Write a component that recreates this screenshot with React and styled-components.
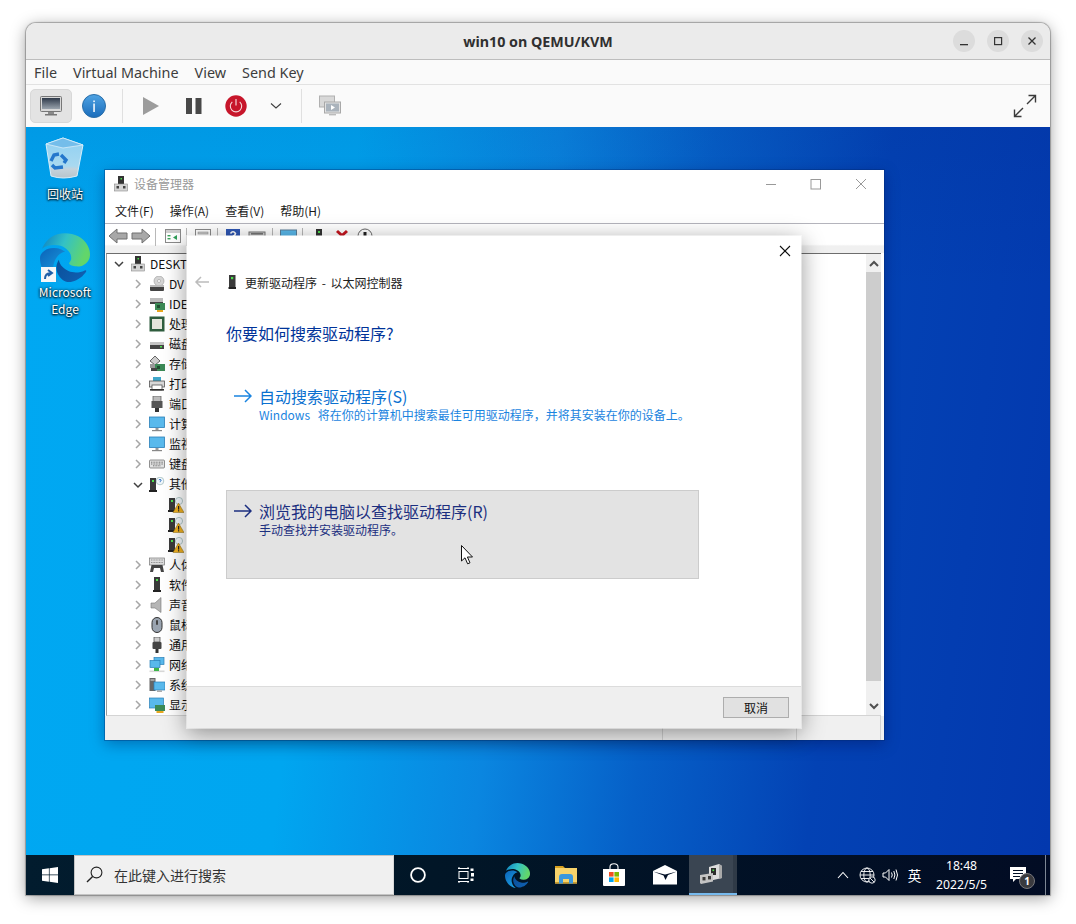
import React from "react";
import styled, { createGlobalStyle } from "styled-components";

const cjk = `"Noto Sans CJK SC", "Noto Sans", sans-serif`;
const latin = `"Noto Sans", "Noto Sans CJK SC", sans-serif`;

const Global = createGlobalStyle`
  html, body { margin: 0; background: #fff; overflow: hidden; }
  * { box-sizing: border-box; }
  svg { display: block; flex: none; }
`;

const Page = styled.div`
  width: 1076px;
  height: 924px;
  padding: 23px 26px 29px;
`;

const VmWindow = styled.div`
  height: 872px;
  display: flex;
  flex-direction: column;
  border-radius: 10px 10px 0 0;
  overflow: hidden;
  box-shadow: 0 0 1px 1px rgba(0, 0, 0, 0.28), 0 3px 16px rgba(0, 0, 0, 0.38);
`;

const TitleBar = styled.div`
  height: 37px;
  flex: none;
  display: flex;
  align-items: center;
  justify-content: center;
  position: relative;
  background: #ebebeb;
  border-bottom: 1px solid #bdbdbd;
  font: 700 14.3px ${latin};
  color: #303030;
`;

const WindowControls = styled.div`
  position: absolute;
  right: 7px;
  top: 7px;
  display: flex;
  gap: 12px;
`;

const RoundButton = styled.div`
  width: 22px;
  height: 22px;
  border-radius: 50%;
  background: #dcdcdc;
  display: flex;
  align-items: center;
  justify-content: center;
`;

const MenuBar = styled.div`
  height: 25px;
  flex: none;
  display: flex;
  align-items: center;
  gap: 16px;
  padding-left: 8px;
  background: #fafafa;
  border-bottom: 1px solid #e2e2e2;
  font: 400 14.4px ${latin};
  color: #3d3d3d;
`;

const Toolbar = styled.div`
  height: 42px;
  flex: none;
  display: flex;
  align-items: center;
  padding: 0 5px 0 4px;
  background: #fafafa;
`;

const ToolButton = styled.div`
  width: ${(p) => p.$w || 42}px;
  height: 34px;
  flex: none;
  display: flex;
  align-items: center;
  justify-content: center;
  border-radius: 5px;
  background: ${(p) => (p.$active ? "#e3e3e3" : "transparent")};
  border: 1px solid ${(p) => (p.$active ? "#d8d8d8" : "transparent")};
  margin-left: ${(p) => (p.$push ? "auto" : `${p.$ml || 0}px`)};
`;

const ToolSep = styled.div`
  width: 1px;
  height: 34px;
  flex: none;
  background: #e0e0e0;
  margin: 0 ${(p) => p.$r}px 0 ${(p) => p.$l}px;
`;

const Desktop = styled.div`
  flex: 1;
  position: relative;
  overflow: hidden;
  background:
    linear-gradient(180deg, rgba(0, 30, 120, 0.1) 0%, rgba(0, 30, 120, 0) 22%),
    linear-gradient(97deg, #00a8f2 0%, #00a6f0 30%, #0a86e0 48%, #0660c8 62%, #0342b4 78%, #0338ae 100%);
`;

const DesktopIcons = styled.div`
  width: 78px;
  padding-top: 10px;
  display: flex;
  flex-direction: column;
  gap: 31px;
`;

const DesktopIcon = styled.div`
  display: flex;
  flex-direction: column;
  align-items: center;
  position: relative;
  font: 400 12px/17px ${cjk};
  color: #fff;
  text-align: center;
  text-shadow: 0 1px 2px #000, 0 0 3px rgba(0, 0, 0, 0.9);
`;

const IconLabel = styled.div`
  margin-top: ${(p) => p.$mt}px;
`;

const ShortcutBadge = styled.div`
  position: absolute;
  left: 15px;
  top: 34px;
  width: 15px;
  height: 15px;
  background: #f4f6f8;
  display: flex;
  align-items: center;
  justify-content: center;
`;

/* windows sit on a free canvas */
const DevMgr = styled.div`
  position: absolute;
  left: 79px;
  top: 43px;
  width: 779px;
  height: 570px;
  display: flex;
  flex-direction: column;
  background: #fff;
  box-shadow: 0 0 0 1px rgba(0, 40, 110, 0.35), 0 4px 14px rgba(0, 10, 70, 0.35);
  font: 400 12px ${cjk};
  color: #1a1a1a;
`;

const DevTitle = styled.div`
  height: 28px;
  flex: none;
  display: flex;
  align-items: center;
  padding: 0 0 1px 8px;
  gap: 5px;
  color: #999;
`;

const DevControls = styled.div`
  margin-left: auto;
  display: flex;
  align-items: center;
  gap: 29px;
  padding-right: 15px;
`;

const DevMenu = styled.div`
  height: 26px;
  flex: none;
  display: flex;
  align-items: center;
  padding-left: 10px;
  border-bottom: 1px solid #b4b4bc;
  gap: 16px;
`;

const DevToolbar = styled.div`
  height: 29px;
  flex: none;
  display: flex;
  align-items: flex-start;
  padding: 4px 0 0 1px;
  background: linear-gradient(180deg, #fff 0%, #fff 70%, #f0f0f0 76%, #f0f0f0 100%);
`;

const DevTool = styled.div`
  width: ${(p) => p.$w || 23}px;
  height: 18px;
  flex: none;
  display: flex;
  justify-content: center;
`;

const DevToolSep = styled.div`
  width: 1px;
  height: 18px;
  flex: none;
  background: #b8b8b8;
  margin: 0 ${(p) => p.$r}px 0 ${(p) => p.$l}px;
`;

const DevBody = styled.div`
  flex: 1;
  display: flex;
  min-height: 0;
  margin: 0 3px 0 1px;
  border-top: 1px solid #6d6d6d;
  border-bottom: 1px solid #d4d4d4;
  border-left: 1px solid #9a9a9a;
`;

const Tree = styled.div`
  flex: 1;
  display: flex;
  flex-direction: column;
`;

const TreeRow = styled.div`
  height: ${(p) => (p.$tall ? 21 : 20)}px;
  flex: none;
  display: flex;
  align-items: center;
  padding-left: ${(p) => p.$pad}px;
  white-space: nowrap;
`;

const Caret = styled.div`
  width: 16px;
  height: 16px;
  flex: none;
  margin-right: 3px;
  display: flex;
  align-items: center;
  justify-content: center;
`;

const RowText = styled.span`
  margin: 0 0 2px 4px;
  color: #111;
`;

const Scrollbar = styled.div`
  width: 15px;
  flex: none;
  display: flex;
  flex-direction: column;
  background: #f0f0f0;
  align-items: center;
`;

const ScrollEnd = styled.div`
  height: 18px;
  width: 100%;
  flex: none;
  display: flex;
  align-items: center;
  justify-content: center;
`;

const ScrollThumb = styled.div`
  width: 100%;
  height: 409px;
  background: #cdcdcd;
`;

const ScrollTrack = styled.div`
  flex: 1;
`;

const StatusBar = styled.div`
  height: 24px;
  flex: none;
  display: flex;
  background: #f0f0f0;
`;

const StatusCell = styled.div`
  width: ${(p) => p.$w}px;
  border-right: 1px solid #d2d2d2;
`;

const Dialog = styled.div`
  position: absolute;
  left: 161px;
  top: 109px;
  width: 614px;
  height: 492px;
  display: flex;
  flex-direction: column;
  background: #fff;
  box-shadow: 0 0 0 1px rgba(255, 255, 255, 0.5), 0 5px 22px rgba(0, 0, 0, 0.42);
  font: 400 12px ${cjk};
`;

const DialogTop = styled.div`
  height: 30px;
  flex: none;
  display: flex;
  align-items: center;
  justify-content: flex-end;
  padding-right: 8px;
`;

const DialogHead = styled.div`
  height: 32px;
  flex: none;
  display: flex;
  align-items: center;
  padding-left: 7px;
  color: #222;
  word-spacing: 2px;
`;

const HeadIcon = styled.div`
  margin-right: ${(p) => p.$mr}px;
`;

const Heading = styled.div`
  margin: 23px 0 30px 39px;
  font-size: 16px;
  line-height: 24px;
  color: #003399;
`;

const Options = styled.div`
  margin-left: 39px;
  width: 473px;
  display: flex;
  flex-direction: column;
  gap: 26px;
`;

const Option = styled.div`
  height: 89px;
  padding: 9px 0 0 7px;
  display: flex;
  gap: 7px;
  position: relative;
  background: ${(p) => (p.$hover ? "#e3e3e3" : "transparent")};
  border: 1px solid ${(p) => (p.$hover ? "#cccccc" : "transparent")};
`;

const ArrowBox = styled.div`
  height: 22px;
  display: flex;
  align-items: center;
`;

const OptionTitle = styled.div`
  font-size: 16px;
  line-height: 22px;
  color: ${(p) => (p.$hover ? "#1c2f80" : "#0a70cf")};
`;

const OptionSub = styled.div`
  font-size: 12px;
  line-height: 18px;
  margin-top: -1px;
  word-spacing: 5px;
  color: ${(p) => (p.$hover ? "#1c2f80" : "#1a84e0")};
`;

const Cursor = styled.div`
  position: absolute;
  left: 234px;
  top: 54px;
`;

const DialogFoot = styled.div`
  margin-top: auto;
  height: 42px;
  flex: none;
  display: flex;
  align-items: center;
  justify-content: flex-end;
  padding: 0 12px 1px 0;
  background: #efefef;
  border-top: 1px solid #dcdcdc;
`;

const CancelButton = styled.div`
  width: 66px;
  height: 21px;
  display: flex;
  align-items: center;
  justify-content: center;
  background: #e1e1e1;
  border: 1px solid #adadad;
  color: #111;
`;

const Taskbar = styled.div`
  height: 40px;
  flex: none;
  display: flex;
  align-items: stretch;
  background: linear-gradient(90deg, #021c2e 0%, #011627 40%, #020c24 100%);
`;

const StartButton = styled.div`
  width: 48px;
  flex: none;
  display: flex;
  align-items: center;
  justify-content: center;
`;

const SearchBox = styled.div`
  width: 320px;
  flex: none;
  display: flex;
  align-items: center;
  padding: 0 0 1px 11px;
  gap: 11px;
  background: #f0f0f0;
  border: 1px solid #c4c4c4;
  border-right-color: #d8d8d8;
  font: 400 14px ${cjk};
  color: #333;
`;

const TaskItem = styled.div`
  width: ${(p) => p.$w}px;
  flex: none;
  display: flex;
  align-items: center;
  justify-content: center;
  background: ${(p) => (p.$active ? "#3a4552" : "transparent")};
  border-bottom: ${(p) => (p.$active ? "2px solid #76b9ed" : "none")};
`;

const TaskEdgeStrip = styled.div`
  width: 4px;
  flex: none;
  background: #2f3a47;
  border-bottom: 2px solid #76b9ed;
`;

const Tray = styled.div`
  margin-left: auto;
  display: flex;
  align-items: stretch;
  color: #fff;
`;

const TrayItem = styled.div`
  width: ${(p) => p.$w}px;
  flex: none;
  display: flex;
  align-items: center;
  justify-content: center;
  position: relative;
  font: 400 13.5px ${cjk};
`;

const Clock = styled.div`
  width: 69px;
  flex: none;
  display: flex;
  flex-direction: column;
  align-items: center;
  justify-content: center;
  font: 400 12.2px/19px ${latin};
`;

const NoticeBadge = styled.div`
  position: absolute;
  left: 23px;
  top: 18px;
  width: 16px;
  height: 16px;
  border-radius: 50%;
  background: #3a3a3e;
  border: 1px solid #77777c;
  display: flex;
  align-items: center;
  justify-content: center;
  font: 700 10px ${latin};
  color: #fff;
`;

const ShowDesktop = styled.div`
  width: 5px;
  margin-left: 5px;
  flex: none;
  border-left: 1px solid #7d8794;
`;

/* ---- drawings ---- */

function EdgeLogo({ size, id }) {
  return (
    <svg width={size} height={size} viewBox="0 0 24 24">
      <defs>
        <linearGradient id={`${id}a`} x1="0" y1="0" x2="1" y2="0.3">
          <stop offset="0" stopColor="#0c7fc4" />
          <stop offset="0.5" stopColor="#33c1c6" />
          <stop offset="1" stopColor="#62d66a" />
        </linearGradient>
        <linearGradient id={`${id}b`} x1="0" y1="0" x2="0.7" y2="1">
          <stop offset="0" stopColor="#0b62b8" />
          <stop offset="1" stopColor="#1ba0e2" />
        </linearGradient>
        <linearGradient id={`${id}c`} x1="0" y1="0" x2="1" y2="0.6">
          <stop offset="0" stopColor="#0a4f9a" />
          <stop offset="1" stopColor="#0f5fb0" />
        </linearGradient>
      </defs>
      <path
        fill={`url(#${id}c)`}
        d="M21.86 17.86q.14 0 .25.12.1.13.1.25t-.11.33l-.32.46-.43.53-.44.5q-.21.25-.38.42l-.22.23q-.58.53-1.34 1.04-.76.51-1.6.91-.86.4-1.74.64t-1.67.24q-.9 0-1.69-.28-.8-.28-1.48-.78-.68-.5-1.22-1.17-.53-.66-.92-1.44-.38-.77-.58-1.6-.2-.83-.2-1.67 0-1 .32-1.96.33-.97.87-1.8.14.95.55 1.77.41.82 1.02 1.5.6.68 1.38 1.21.78.54 1.64.9.86.36 1.77.56.92.2 1.8.2 1.12 0 2.18-.24 1.06-.23 2.06-.72l.2-.1.2-.05z"
      />
      <path
        fill={`url(#${id}b)`}
        d="M6.36 16.59q0 1.1.27 2.15.27 1.06.78 2.03.51.96 1.24 1.77.74.82 1.66 1.4-1.47-.2-2.8-.74-1.33-.55-2.48-1.37-1.15-.83-2.08-1.9-.92-1.07-1.58-2.33T.36 14.94Q0 13.54 0 12.06q0-.81.32-1.49.31-.68.83-1.23.53-.55 1.2-.96.66-.4 1.35-.66.74-.27 1.5-.39.78-.12 1.55-.12.7 0 1.42.1.72.12 1.4.35.68.23 1.32.57.63.35 1.16.83-.35 0-.7.07-.33.07-.65.23v-.02q-.63.28-1.2.74-.57.46-1.05 1.04-.48.58-.87 1.26-.38.67-.65 1.39-.27.71-.42 1.44-.15.72-.15 1.38z"
      />
      <path
        fill={`url(#${id}a)`}
        d="M11.96.06q1.7 0 3.33.39 1.63.38 3.07 1.15 1.43.77 2.62 1.93 1.18 1.16 1.98 2.7.49.94.76 1.96.28 1 .28 2.08 0 .89-.23 1.7-.24.8-.69 1.48-.45.68-1.1 1.22-.64.53-1.45.88-.54.24-1.11.36-.58.13-1.16.13-.42 0-.97-.03-.54-.03-1.1-.12-.55-.1-1.05-.28-.5-.19-.84-.5-.12-.09-.23-.24-.1-.16-.1-.33 0-.15.16-.35.16-.2.35-.5.2-.28.36-.68.16-.4.16-.95 0-1.06-.4-1.96-.4-.91-1.06-1.64-.66-.74-1.52-1.28-.86-.55-1.79-.89-.84-.3-1.72-.44-.87-.14-1.76-.14-1.55 0-3.06.45T.94 7.55q.71-1.74 1.81-3.13 1.1-1.38 2.52-2.35Q6.68 1.1 8.37.58q1.7-.52 3.58-.52Z"
      />
    </svg>
  );
}

function RecycleBin() {
  return (
    <svg width="40" height="42" viewBox="0 0 40 42">
      <defs>
        <linearGradient id="binBody" x1="0" y1="0" x2="0" y2="1">
          <stop offset="0" stopColor="#8fd0f2" />
          <stop offset="0.7" stopColor="#a9d9f0" />
          <stop offset="0.78" stopColor="#c4d3dc" />
          <stop offset="1" stopColor="#b8c4cc" />
        </linearGradient>
      </defs>
      <path d="M1 7 L18 1 L38 8 L32 39 Q18 43 6 39 Z" fill="url(#binBody)" stroke="#d8eef9" strokeWidth="1" />
      <path d="M1 7 L18 1 L38 8 L18 11 Z" fill="#74bdea" stroke="#d8eef9" strokeWidth="0.8" />
      <g fill="none" stroke="#2477cc" strokeWidth="3.4">
        <path d="M6 24 L9 18 L14 17" />
        <path d="M16 18 L21 23 L19 26" />
        <path d="M18 30 L10 31 L7 28" />
      </g>
    </svg>
  );
}

function WinLogo() {
  return (
    <svg width="16" height="16" viewBox="0 0 16 16" fill="#fff">
      <path d="M0 2.3 L6.9 1.3 V7.5 H0 Z" />
      <path d="M7.6 1.2 L16 0 V7.5 H7.6 Z" />
      <path d="M0 8.2 H6.9 V14.7 L0 13.7 Z" />
      <path d="M7.6 8.2 H16 V16 L7.6 14.8 Z" />
    </svg>
  );
}

function Tower({ x = 4, y = 0, w = 8, h = 14 }) {
  return (
    <g>
      <rect x={x} y={y} width={w} height={h} fill="#3a3a3a" />
      <rect x={x + w / 2 - 1} y={y + 2} width="2" height="2" fill="#4de04d" />
      <rect x={x - 1} y={y + h} width={w + 2} height="2" fill="#222" />
    </g>
  );
}

const treeIcons = {
  root: (
    <g>
      <rect x="5" y="0" width="6" height="8" fill="#333" />
      <rect x="7.5" y="2" width="1.5" height="1.5" fill="#4de04d" />
      <rect x="1.5" y="8" width="13" height="7" fill="#d4d4d4" stroke="#8a8a8a" strokeWidth="0.6" />
      <rect x="3.5" y="10" width="2.5" height="2.5" fill="#444" />
      <rect x="10" y="10" width="2.5" height="2.5" fill="#444" />
    </g>
  ),
  dvd: (
    <g>
      <circle cx="10" cy="5" r="5" fill="#d4d4d4" stroke="#999" strokeWidth="0.6" />
      <circle cx="10" cy="5" r="1.5" fill="#fff" stroke="#888" strokeWidth="0.5" />
      <rect x="1" y="10" width="14" height="5" rx="1" fill="#444" />
      <rect x="1" y="9" width="14" height="2" fill="#bbb" />
    </g>
  ),
  ide: (
    <g>
      <rect x="1" y="2" width="13" height="4" fill="#bdbdbd" />
      <rect x="1" y="6" width="13" height="2" fill="#444" />
      <rect x="6" y="7" width="10" height="7" fill="#3c8a56" />
      <rect x="8" y="9" width="3" height="3" fill="#1f4e30" />
      <rect x="8" y="14" width="6" height="2" fill="#e8a820" />
    </g>
  ),
  cpu: (
    <g>
      <rect x="0.5" y="0.5" width="15" height="15" fill="#2f5d3e" />
      <rect x="3" y="3" width="10" height="10" fill="#e6e6dc" />
    </g>
  ),
  disk: (
    <g>
      <rect x="1" y="6" width="14" height="3" fill="#c4c4c4" />
      <rect x="1" y="9" width="14" height="4" fill="#444" />
      <rect x="11" y="10" width="2" height="1.5" fill="#4de04d" />
    </g>
  ),
  storage: (
    <g>
      <path d="M1 5 L6 0 L11 5 L6 9 Z" fill="#ccc" stroke="#444" strokeWidth="0.8" />
      <rect x="1" y="8" width="9" height="4" fill="#999" />
      <rect x="6" y="8" width="10" height="7" fill="#3c8a56" />
      <rect x="8" y="10" width="3" height="3" fill="#1f4e30" />
      <rect x="2" y="12" width="6" height="3" fill="#444" />
    </g>
  ),
  printer: (
    <g>
      <rect x="4" y="1" width="8" height="4" fill="#3fa7c9" />
      <rect x="0.5" y="5" width="15" height="6" fill="#d8d8d8" stroke="#555" strokeWidth="0.8" />
      <rect x="3" y="9" width="10" height="5" fill="#fff" stroke="#555" strokeWidth="0.8" />
      <rect x="1" y="13" width="14" height="1.6" fill="#333" />
    </g>
  ),
  port: (
    <g>
      <rect x="4" y="0" width="8" height="6" fill="#bbb" stroke="#555" strokeWidth="0.7" />
      <rect x="2.5" y="5" width="11" height="7" fill="#555" />
      <rect x="6" y="12" width="4" height="4" fill="#333" />
    </g>
  ),
  monitor: (
    <g>
      <rect x="0.5" y="1" width="15" height="10.5" fill="#59b9ec" stroke="#2a7fb8" strokeWidth="0.8" />
      <rect x="6.5" y="12" width="3" height="2" fill="#999" />
      <rect x="3" y="14" width="10" height="1.2" fill="#888" />
    </g>
  ),
  keyboard: (
    <g>
      <rect x="0.5" y="4" width="15" height="8" rx="1" fill="#e2e2e2" stroke="#666" strokeWidth="0.7" />
      <path d="M2 6.2 H14 M2 8 H14 M4 9.8 H12" stroke="#666" strokeWidth="0.9" strokeDasharray="1 0.6" />
    </g>
  ),
  other: (
    <g>
      <Tower x={1} y={1} w={6} h={12} />
      <circle cx="11" cy="4" r="3.8" fill="#f2f8fc" stroke="#8aa" strokeWidth="0.6" />
      <path d="M9.8 3 Q11 1.6 12.2 3 Q12.2 4 11 4.6 V5.2" fill="none" stroke="#2a6fc4" strokeWidth="0.9" />
    </g>
  ),
  warn: (
    <g>
      <Tower x={1} y={1} w={6} h={12} />
      <circle cx="11" cy="4" r="3.6" fill="#f2f8fc" stroke="#8aa" strokeWidth="0.6" />
      <path d="M10.5 6 L16 15.5 H5 Z" fill="#f0b020" stroke="#8a6a10" strokeWidth="0.5" />
      <rect x="10" y="9" width="1.2" height="3.6" fill="#222" />
      <rect x="10" y="13.2" width="1.2" height="1.2" fill="#222" />
    </g>
  ),
  hid: (
    <g>
      <rect x="0.5" y="1" width="15" height="7" fill="#ddd" stroke="#777" strokeWidth="0.7" />
      <path d="M2 3 H14 M2 5.5 H14" stroke="#888" strokeWidth="0.9" strokeDasharray="1 0.6" />
      <path d="M1 15 L2.5 8 H13.5 L15 15 H12 L11 11 H5 L4 15 Z" fill="#444" />
    </g>
  ),
  soft: <Tower x={5} y={0} w={6} h={13} />,
  sound: (
    <g>
      <path d="M2 6 H6 L12 0.5 V15.5 L6 11 H2 Z" fill="#b5b5b5" stroke="#777" strokeWidth="0.6" />
    </g>
  ),
  mouse: (
    <g>
      <rect x="3" y="0.5" width="10" height="15" rx="5" fill="#9aa4b0" stroke="#333" strokeWidth="1" />
      <rect x="7" y="3" width="2" height="5" rx="1" fill="#444" />
    </g>
  ),
  usb: (
    <g>
      <rect x="5" y="0" width="6" height="5" fill="#ccc" stroke="#444" strokeWidth="0.7" />
      <rect x="3.5" y="5" width="9" height="7" rx="1" fill="#444" />
      <rect x="6.5" y="12" width="3" height="4" fill="#333" />
    </g>
  ),
  net: (
    <g>
      <rect x="5" y="0.5" width="10" height="7" fill="#59b9ec" stroke="#2a7fb8" strokeWidth="0.7" />
      <rect x="1" y="3.5" width="10" height="7" fill="#59b9ec" stroke="#2a7fb8" strokeWidth="0.7" />
      <rect x="0.5" y="13.5" width="15" height="1.6" fill="#d8d8d8" />
      <rect x="5" y="11" width="5" height="3" fill="#3db54a" />
    </g>
  ),
  system: (
    <g>
      <rect x="0.5" y="1" width="6" height="13" fill="#666" />
      <rect x="1.5" y="2.5" width="4" height="1" fill="#ddd" />
      <rect x="5" y="5" width="11" height="8" fill="#59b9ec" stroke="#2a7fb8" strokeWidth="0.7" />
      <rect x="8" y="13.5" width="5" height="1.3" fill="#999" />
    </g>
  ),
  display: (
    <g>
      <rect x="0.5" y="1" width="14" height="10" fill="#59b9ec" stroke="#2a7fb8" strokeWidth="0.7" />
      <rect x="6" y="8" width="10" height="6" fill="#3c8a56" />
      <rect x="7.5" y="14" width="7" height="2" fill="#e8a820" />
    </g>
  ),
};

function TreeIcon({ name }) {
  return (
    <svg width="16" height="16" viewBox="0 0 16 16">
      {treeIcons[name]}
    </svg>
  );
}

function Chevron({ open }) {
  return (
    <svg width="10" height="10" viewBox="0 0 10 10" fill="none" stroke={open ? "#404040" : "#a6a6a6"} strokeWidth="1.5">
      {open ? <path d="M1 3 L5 7 L9 3" /> : <path d="M3 1 L7 5 L3 9" />}
    </svg>
  );
}

function LongArrow({ color }) {
  return (
    <svg width="18" height="14" viewBox="0 0 18 14" fill="none" stroke={color} strokeWidth="1.5">
      <path d="M0 7 H17 M11 1 L17 7 L11 13" />
    </svg>
  );
}

const treeRows = [
  { level: 0, icon: "root", text: "DESKT", open: true },
  { level: 1, icon: "dvd", text: "DV" },
  { level: 1, icon: "ide", text: "IDE" },
  { level: 1, icon: "cpu", text: "处理" },
  { level: 1, icon: "disk", text: "磁盘" },
  { level: 1, icon: "storage", text: "存储" },
  { level: 1, icon: "printer", text: "打印" },
  { level: 1, icon: "port", text: "端口" },
  { level: 1, icon: "monitor", text: "计算" },
  { level: 1, icon: "monitor", text: "监视" },
  { level: 1, icon: "keyboard", text: "键盘" },
  { level: 1, icon: "other", text: "其他", open: true, tall: true },
  { level: 2, icon: "warn" },
  { level: 2, icon: "warn" },
  { level: 2, icon: "warn" },
  { level: 1, icon: "hid", text: "人体" },
  { level: 1, icon: "soft", text: "软件" },
  { level: 1, icon: "sound", text: "声音" },
  { level: 1, icon: "mouse", text: "鼠标" },
  { level: 1, icon: "usb", text: "通用" },
  { level: 1, icon: "net", text: "网络" },
  { level: 1, icon: "system", text: "系统" },
  { level: 1, icon: "display", text: "显示" },
];

const rowPad = [4, 23, 61];

function DevToolbarIcons() {
  return (
    <>
      <DevTool>
        <svg width="20" height="16" viewBox="0 0 20 16">
          <path d="M1 8 L9 1 V5 H19 V11 H9 V15 Z" fill="#a8a8a8" stroke="#707070" />
        </svg>
      </DevTool>
      <DevTool>
        <svg width="20" height="16" viewBox="0 0 20 16">
          <path d="M19 8 L11 1 V5 H1 V11 H11 V15 Z" fill="#a8a8a8" stroke="#707070" />
        </svg>
      </DevTool>
      <DevToolSep $l={3} $r={5} />
      <DevTool>
        <svg width="16" height="16" viewBox="0 0 16 16">
          <rect x="0.5" y="1.5" width="15" height="13" fill="#fff" stroke="#8a8a8a" />
          <rect x="1" y="2" width="14" height="3" fill="#cfcfcf" />
          <rect x="2.5" y="7" width="3" height="1.4" fill="#3aa35a" />
          <rect x="2.5" y="10" width="3" height="1.4" fill="#3aa35a" />
          <path d="M12 7 L8 9.5 L12 12 Z" fill="#2f9e58" />
        </svg>
      </DevTool>
      <DevToolSep $l={2} $r={4} />
      <DevTool>
        <svg width="16" height="16" viewBox="0 0 16 16">
          <rect x="0.5" y="1.5" width="15" height="13" fill="#fff" stroke="#8a8a8a" />
          <rect x="3" y="4" width="10" height="2" fill="#cfcfcf" stroke="#8a8a8a" strokeWidth="0.5" />
        </svg>
      </DevTool>
      <DevToolSep $l={3} $r={3} />
      <DevTool>
        <svg width="16" height="16" viewBox="0 0 16 16">
          <rect x="1" y="1" width="14" height="14" fill="#2f57b4" />
          <path d="M5.5 5.5 Q8 2 10.5 5.5 Q10.5 7 8 8.5 V10" fill="none" stroke="#fff" strokeWidth="1.6" />
        </svg>
      </DevTool>
      <DevTool $w={25}>
        <svg width="18" height="16" viewBox="0 0 18 16">
          <rect x="1" y="4" width="16" height="8" fill="#cfcfcf" stroke="#777" />
          <rect x="3" y="5" width="12" height="1.6" fill="#777" />
        </svg>
      </DevTool>
      <DevToolSep $l={3} $r={4} />
      <DevTool>
        <svg width="18" height="16" viewBox="0 0 18 16">
          <rect x="0.5" y="2" width="16" height="12" fill="#59b9ec" stroke="#5a7f9a" />
        </svg>
      </DevTool>
      <DevToolSep $l={2} $r={4} />
      <DevTool>
        <svg width="12" height="16" viewBox="0 0 12 16">
          <rect x="3" y="1" width="6" height="13" fill="#333" />
          <rect x="5" y="3" width="2" height="2" fill="#4de04d" />
        </svg>
      </DevTool>
      <DevTool>
        <svg width="14" height="14" viewBox="0 0 14 14">
          <path d="M2 3 L12 12 M12 3 L2 12" stroke="#c6161f" strokeWidth="3" />
        </svg>
      </DevTool>
      <DevTool>
        <svg width="16" height="16" viewBox="0 0 16 16">
          <circle cx="8" cy="8" r="7" fill="#fff" stroke="#666" />
          <rect x="6.5" y="4" width="3" height="6" fill="#222" />
        </svg>
      </DevTool>
    </>
  );
}

export default function App() {
  return (
    <Page>
      <Global />
      <VmWindow>
        <TitleBar>
          win10 on QEMU/KVM
          <WindowControls>
            <RoundButton>
              <svg width="10" height="10" viewBox="0 0 10 10">
                <rect x="1" y="8" width="8" height="1.3" fill="#333" />
              </svg>
            </RoundButton>
            <RoundButton>
              <svg width="10" height="10" viewBox="0 0 10 10" fill="none" stroke="#333" strokeWidth="1.2">
                <rect x="1.6" y="1.6" width="7" height="7" />
              </svg>
            </RoundButton>
            <RoundButton>
              <svg width="10" height="10" viewBox="0 0 10 10" stroke="#333" strokeWidth="1.3">
                <path d="M1.5 1.5 L8.5 8.5 M8.5 1.5 L1.5 8.5" />
              </svg>
            </RoundButton>
          </WindowControls>
        </TitleBar>
        <MenuBar>
          <span>File</span>
          <span>Virtual Machine</span>
          <span>View</span>
          <span>Send Key</span>
        </MenuBar>
        <Toolbar>
          <ToolButton $active>
            <svg width="22" height="20" viewBox="0 0 22 20">
              <defs>
                <linearGradient id="scr" x1="0" y1="0" x2="0" y2="1">
                  <stop offset="0" stopColor="#2f3a4a" />
                  <stop offset="1" stopColor="#9aa3ad" />
                </linearGradient>
              </defs>
              <rect x="0.5" y="0.5" width="21" height="15" rx="1" fill="#d8d8d8" stroke="#777" />
              <rect x="2" y="2" width="18" height="11" fill="url(#scr)" />
              <rect x="8" y="16" width="6" height="2" fill="#8a8a8a" />
              <rect x="5" y="18" width="12" height="1.5" fill="#777" />
            </svg>
          </ToolButton>
          <ToolButton $ml={1}>
            <svg width="24" height="24" viewBox="0 0 24 24">
              <defs>
                <linearGradient id="inf" x1="0" y1="0" x2="0" y2="1">
                  <stop offset="0" stopColor="#4fa3e3" />
                  <stop offset="1" stopColor="#1a6cbb" />
                </linearGradient>
              </defs>
              <circle cx="12" cy="12" r="11.5" fill="url(#inf)" stroke="#2a6ea8" />
              <rect x="11.3" y="9.5" width="1.5" height="8.5" fill="#fff" />
              <rect x="11.3" y="6.5" width="1.5" height="1.6" fill="#fff" />
            </svg>
          </ToolButton>
          <ToolSep $l={7} $r={7} />
          <ToolButton>
            <svg width="18" height="20" viewBox="0 0 18 20">
              <path d="M1 1 L17 10 L1 19 Z" fill="#9c9c9c" />
            </svg>
          </ToolButton>
          <ToolButton $w={44}>
            <svg width="16" height="16" viewBox="0 0 16 16" fill="#484848">
              <rect x="0" y="0" width="6" height="16" />
              <rect x="9.5" y="0" width="6" height="16" />
            </svg>
          </ToolButton>
          <ToolButton $w={40}>
            <svg width="22" height="22" viewBox="0 0 22 22">
              <circle cx="11" cy="11" r="10.7" fill="#c7162b" />
              <path d="M7.3 6.8 A5.7 5.7 0 1 0 14.7 6.8" fill="none" stroke="#f5d5d8" strokeWidth="1.1" />
              <path d="M11 4 V10.5" stroke="#f5d5d8" strokeWidth="1.2" />
            </svg>
          </ToolButton>
          <ToolButton $w={40}>
            <svg width="12" height="8" viewBox="0 0 12 8" fill="none" stroke="#404040" strokeWidth="1.1">
              <path d="M1 1.5 L6 6 L11 1.5" />
            </svg>
          </ToolButton>
          <ToolSep $l={5} $r={8} />
          <ToolButton $w={40}>
            <svg width="22" height="22" viewBox="0 0 22 22">
              <rect x="0.5" y="1" width="15" height="11" fill="#d8d8d8" stroke="#b0b0b0" />
              <rect x="5.5" y="7" width="16" height="11" fill="#e2e2e2" stroke="#a8a8a8" />
              <rect x="7" y="8.5" width="13" height="8" fill="#aab3bc" />
              <path d="M12 10 L16 12.5 L12 15 Z" fill="#fff" />
              <rect x="10" y="19" width="7" height="1.4" fill="#bbb" />
            </svg>
          </ToolButton>
          <ToolButton $w={40} $push>
            <svg width="24" height="24" viewBox="0 0 24 24" fill="none" stroke="#3a3a3a" strokeWidth="1.4">
              <path d="M14 10 L22.5 1.5 M15.5 1.5 H22.5 V8.5" />
              <path d="M10 14 L1.5 22.5 M1.5 15.5 V22.5 H8.5" />
            </svg>
          </ToolButton>
        </Toolbar>
        <Desktop>
          <DesktopIcons>
            <DesktopIcon>
              <RecycleBin />
              <IconLabel $mt={6}>回收站</IconLabel>
            </DesktopIcon>
            <DesktopIcon>
              <EdgeLogo size={50} id="de" />
              <ShortcutBadge>
                <svg width="11" height="11" viewBox="0 0 11 11" fill="none" stroke="#1f5fa8" strokeWidth="2">
                  <path d="M2 10 Q2 4 8 4 M5 1 L9 4 L5 7" />
                </svg>
              </ShortcutBadge>
              <IconLabel $mt={0}>
                Microsoft
                <br />
                Edge
              </IconLabel>
            </DesktopIcon>
          </DesktopIcons>

          <DevMgr>
            <DevTitle>
              <TreeIcon name="root" />
              设备管理器
              <DevControls>
                <svg width="16" height="12" viewBox="0 0 16 12">
                  <rect x="3" y="6" width="10" height="1" fill="#999" />
                </svg>
                <svg width="16" height="12" viewBox="0 0 16 12" fill="none" stroke="#999">
                  <rect x="3" y="1.5" width="9.5" height="9.5" />
                </svg>
                <svg width="16" height="12" viewBox="0 0 16 12" stroke="#999">
                  <path d="M3 1 L13 11 M13 1 L3 11" />
                </svg>
              </DevControls>
            </DevTitle>
            <DevMenu>
              <span>文件(F)</span>
              <span>操作(A)</span>
              <span>查看(V)</span>
              <span>帮助(H)</span>
            </DevMenu>
            <DevToolbar>
              <DevToolbarIcons />
            </DevToolbar>
            <DevBody>
              <Tree>
                {treeRows.map((row, i) => (
                  <TreeRow key={i} $pad={rowPad[row.level]} $tall={row.tall}>
                    {row.level < 2 && (
                      <Caret>
                        <Chevron open={row.open} />
                      </Caret>
                    )}
                    <TreeIcon name={row.icon} />
                    {row.text && <RowText>{row.text}</RowText>}
                  </TreeRow>
                ))}
              </Tree>
              <Scrollbar>
                <ScrollEnd>
                  <svg width="10" height="7" viewBox="0 0 10 7" fill="none" stroke="#505050" strokeWidth="2">
                    <path d="M1 6 L5 2 L9 6" />
                  </svg>
                </ScrollEnd>
                <ScrollThumb />
                <ScrollTrack />
                <ScrollEnd>
                  <svg width="10" height="7" viewBox="0 0 10 7" fill="none" stroke="#505050" strokeWidth="2">
                    <path d="M1 1 L5 5 L9 1" />
                  </svg>
                </ScrollEnd>
              </Scrollbar>
            </DevBody>
            <StatusBar>
              <StatusCell $w={558} />
              <StatusCell $w={134} />
              <StatusCell $w={84} />
            </StatusBar>
          </DevMgr>

          <Dialog>
            <DialogTop>
              <svg width="16" height="16" viewBox="0 0 16 16" stroke="#111" strokeWidth="1.1">
                <path d="M3 3 L13 13 M13 3 L3 13" />
              </svg>
            </DialogTop>
            <DialogHead>
              <HeadIcon $mr={14}>
                <svg width="16" height="14" viewBox="0 0 16 14" fill="none" stroke="#bcbcbc" strokeWidth="1.5">
                  <path d="M15 7 H2 M7 2 L2 7 L7 12" />
                </svg>
              </HeadIcon>
              <HeadIcon $mr={5}>
                <svg width="16" height="16" viewBox="0 0 16 16">
                  <rect x="5" y="1" width="6.5" height="12" fill="#3a3a3a" />
                  <rect x="7" y="3" width="2.2" height="2.2" fill="#4de04d" />
                  <rect x="4.5" y="13" width="7.5" height="2" fill="#222" />
                </svg>
              </HeadIcon>
              更新驱动程序 - 以太网控制器
            </DialogHead>
            <Heading>你要如何搜索驱动程序?</Heading>
            <Options>
              <Option>
                <ArrowBox>
                  <LongArrow color="#1a84e0" />
                </ArrowBox>
                <div>
                  <OptionTitle>自动搜索驱动程序(S)</OptionTitle>
                  <OptionSub>Windows 将在你的计算机中搜索最佳可用驱动程序，并将其安装在你的设备上。</OptionSub>
                </div>
              </Option>
              <Option $hover>
                <ArrowBox>
                  <LongArrow color="#1c2f80" />
                </ArrowBox>
                <div>
                  <OptionTitle $hover>浏览我的电脑以查找驱动程序(R)</OptionTitle>
                  <OptionSub $hover>手动查找并安装驱动程序。</OptionSub>
                </div>
                <Cursor>
                  <svg width="13" height="20" viewBox="0 0 13 20">
                    <path d="M0.5 0.5 V16 L4 12.8 L6.6 18.8 L9 17.8 L6.4 12 H11.5 Z" fill="#fff" stroke="#111" strokeWidth="1" />
                  </svg>
                </Cursor>
              </Option>
            </Options>
            <DialogFoot>
              <CancelButton>取消</CancelButton>
            </DialogFoot>
          </Dialog>
        </Desktop>
        <Taskbar>
          <StartButton>
            <WinLogo />
          </StartButton>
          <SearchBox>
            <svg width="17" height="17" viewBox="0 0 17 17" fill="none" stroke="#222" strokeWidth="1.1">
              <circle cx="10.5" cy="6.5" r="5.4" />
              <path d="M6.6 10.4 L1 16" strokeWidth="1.4" />
            </svg>
            在此键入进行搜索
          </SearchBox>
          <TaskItem $w={48}>
            <svg width="16" height="16" viewBox="0 0 16 16" fill="none" stroke="#fff" strokeWidth="1.8">
              <circle cx="8" cy="8" r="6.9" />
            </svg>
          </TaskItem>
          <TaskItem $w={48}>
            <svg width="16" height="16" viewBox="0 0 16 16" fill="none" stroke="#fff" strokeWidth="1">
              <path d="M0 1.5 H11 M0 14.5 H11 M1 0 V1.5 M10 0 V1.5 M1 14.5 V16 M10 14.5 V16" />
              <rect x="1" y="4.5" width="9" height="7" />
              <rect x="13" y="2" width="2" height="1.5" fill="#fff" />
              <rect x="13" y="6" width="3" height="3.5" fill="#fff" stroke="none" />
              <rect x="13" y="12" width="2" height="1.5" fill="#fff" />
            </svg>
          </TaskItem>
          <TaskItem $w={54}>
            <EdgeLogo size={25} id="te" />
          </TaskItem>
          <TaskItem $w={44}>
            <svg width="22" height="20" viewBox="0 0 22 20">
              <path d="M0 1 H8 L10 3 H0 Z" fill="#d6a020" />
              <rect x="0" y="3" width="22" height="15.5" fill="#f7d36b" />
              <rect x="0" y="17" width="22" height="1.5" fill="#c99a2e" />
              <path d="M4 12 Q4 9 7 9 H15 Q18 9 18 12 V18.5 H14 V14 H8 V18.5 H4 Z" fill="#3b97dd" />
            </svg>
          </TaskItem>
          <TaskItem $w={52}>
            <svg width="24" height="24" viewBox="0 0 24 24">
              <path d="M8 6 V4 Q8 0.7 12 0.7 Q16 0.7 16 4 V6" fill="none" stroke="#fff" strokeWidth="1.1" />
              <path d="M1 6 H23 V22 Q23 23 22 23 H2 Q1 23 1 22 Z" fill="#fff" />
              <rect x="7" y="9" width="4.6" height="4.6" fill="#f25022" />
              <rect x="12.4" y="9" width="4.6" height="4.6" fill="#7fba00" />
              <rect x="7" y="14.4" width="4.6" height="4.6" fill="#00a4ef" />
              <rect x="12.4" y="14.4" width="4.6" height="4.6" fill="#ffb900" />
            </svg>
          </TaskItem>
          <TaskItem $w={49}>
            <svg width="24" height="20" viewBox="0 0 24 20">
              <path d="M0 6 L12 0 L24 6 V19.5 H0 Z" fill="#fff" />
              <path d="M0 6.5 L12 9.5 L24 6.5 L15 10 L12.5 15 L10.5 10.5 Z" fill="#021026" />
            </svg>
          </TaskItem>
          <TaskItem $w={44} $active>
            <svg width="24" height="22" viewBox="0 0 24 22">
              <path d="M10 4 L20 1 L23 3 V15 L10 18 Z" fill="#dcdcdc" />
              <path d="M20 1 L23 3 V15 L20 15.7 Z" fill="#a9a9a9" />
              <rect x="12" y="5" width="5" height="7" fill="#2c2c2c" />
              <rect x="13.5" y="6.5" width="1.6" height="1.6" fill="#4de04d" />
              <path d="M1 12 L14 10 V18.5 L2 21 L1 20 Z" fill="#c4c4c4" />
              <rect x="3.5" y="14" width="3" height="3.4" fill="#3a3a3a" />
              <rect x="9" y="13" width="3" height="3.4" fill="#3a3a3a" />
            </svg>
          </TaskItem>
          <TaskEdgeStrip />
          <Tray>
            <TrayItem $w={24}>
              <svg width="12" height="8" viewBox="0 0 12 8" fill="none" stroke="#fff" strokeWidth="1.1">
                <path d="M1 7 L6 1.5 L11 7" />
              </svg>
            </TrayItem>
            <TrayItem $w={24}>
              <svg width="17" height="17" viewBox="0 0 17 17" fill="none" stroke="#fff" strokeWidth="0.9">
                <circle cx="8" cy="8" r="7" />
                <ellipse cx="8" cy="8" rx="3.2" ry="7" />
                <path d="M1 8 H15 M2 4.5 H14 M2 11.5 H14" />
                <circle cx="13" cy="13" r="3.2" fill="#021026" stroke="#fff" />
                <path d="M11 11 L15 15" />
              </svg>
            </TrayItem>
            <TrayItem $w={23}>
              <svg width="17" height="14" viewBox="0 0 17 14" fill="none" stroke="#fff" strokeWidth="1">
                <path d="M1 5 H3.5 L7 1.5 V12.5 L3.5 9 H1 Z" />
                <path d="M9.5 4.5 Q11 7 9.5 9.5 M11.8 3 Q14 7 11.8 11 M14 1.5 Q17 7 14 12.5" />
              </svg>
            </TrayItem>
            <TrayItem $w={25}>英</TrayItem>
            <Clock>
              <span>18:48</span>
              <span>2022/5/5</span>
            </Clock>
            <TrayItem $w={44}>
              <svg width="16" height="16" viewBox="0 0 16 16">
                <path d="M0 0 H16 V12 H6 L3 15 V12 H0 Z" fill="#fff" />
                <path d="M3 3.5 H13 M3 6.5 H13 M3 9.5 H10" stroke="#021026" strokeWidth="1" />
              </svg>
              <NoticeBadge>1</NoticeBadge>
            </TrayItem>
            <ShowDesktop />
          </Tray>
        </Taskbar>
      </VmWindow>
    </Page>
  );
}
